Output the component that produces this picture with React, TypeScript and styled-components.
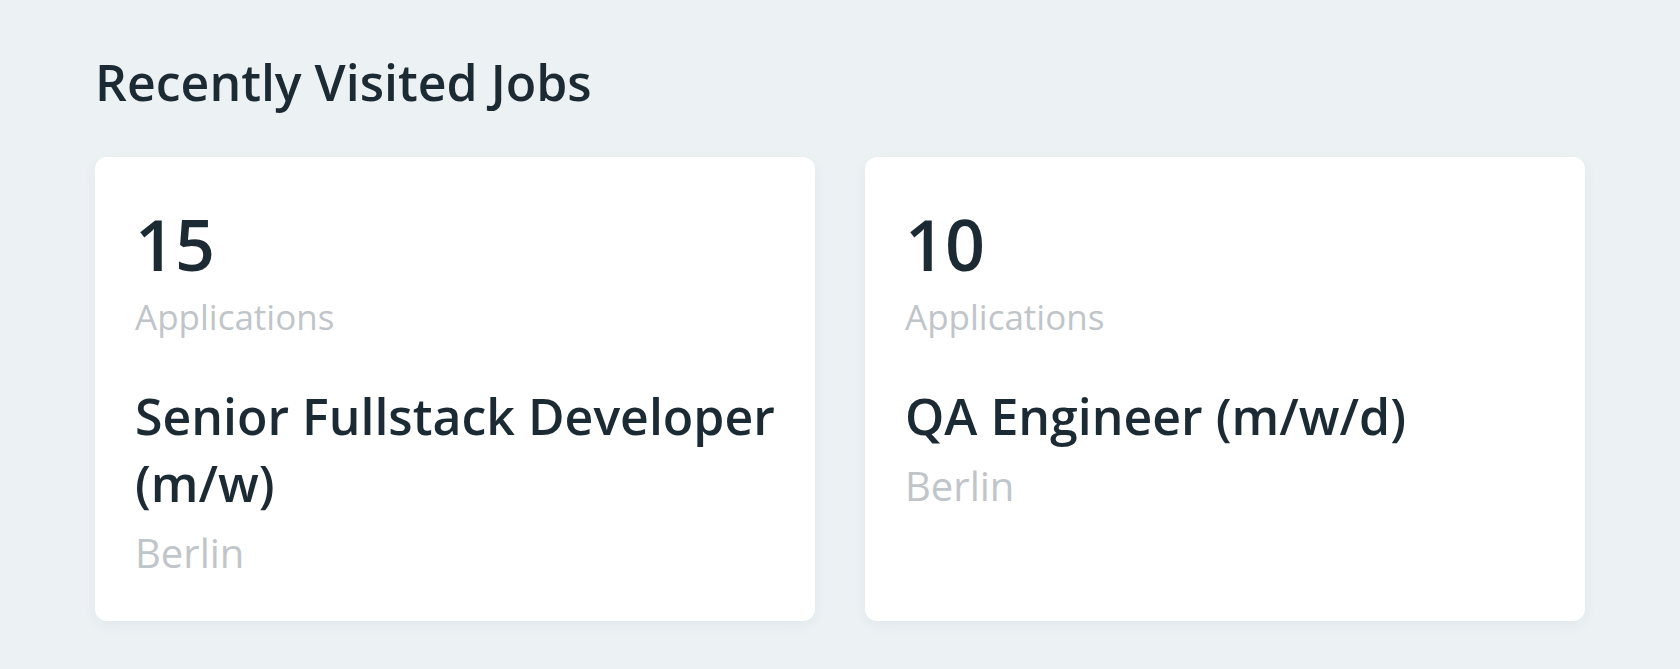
import React from "react";
import styled, { createGlobalStyle } from "styled-components";

const GlobalStyle = createGlobalStyle`
  html, body {
    margin: 0;
    padding: 0;
    background: #ecf1f4;
  }
  body {
    font-family: "Open Sans", "Noto Sans", sans-serif;
    color: #1b2a33;
  }
`;

const Page = styled.main`
  padding: 50px 95px;
  box-sizing: border-box;
  width: 100%;
  min-height: 669px;
  background: #ecf1f4;
`;

const Heading = styled.h2`
  margin: 0 0 42px;
  font-size: 50px;
  line-height: 1.3;
  font-weight: 600;
  color: #1b2a33;
`;

const Grid = styled.div`
  display: grid;
  grid-template-columns: 1fr 1fr;
  gap: 50px;
`;

const Card = styled.article`
  background: #ffffff;
  border-radius: 12px;
  padding: 40px 40px 42px;
  box-shadow: 0 4px 14px rgba(30, 50, 70, 0.05);
  display: flex;
  flex-direction: column;
`;

const Count = styled.div`
  font-size: 70px;
  line-height: 95px;
  font-weight: 600;
  color: #1b2a33;
`;

const Label = styled.div`
  margin-top: 2px;
  font-size: 35px;
  line-height: 1.3;
  font-weight: 400;
  color: #bfc5c9;
`;

const Title = styled.h3`
  margin: 43px 0 0;
  font-size: 50px;
  line-height: 67px;
  font-weight: 600;
  color: #1b2a33;
`;

const City = styled.div`
  margin-top: 10px;
  font-size: 40px;
  line-height: 52px;
  font-weight: 400;
  color: #bfc5c9;
`;

const jobs = [
  { count: 15, title: "Senior Fullstack Developer (m/w)", city: "Berlin" },
  { count: 10, title: "QA Engineer (m/w/d)", city: "Berlin" },
];

export default function App() {
  return (
    <>
      <GlobalStyle />
      <Page>
        <Heading>Recently Visited Jobs</Heading>
        <Grid>
          {jobs.map((job) => (
            <Card key={job.title}>
              <Count>{job.count}</Count>
              <Label>Applications</Label>
              <Title>{job.title}</Title>
              <City>{job.city}</City>
            </Card>
          ))}
        </Grid>
      </Page>
    </>
  );
}
